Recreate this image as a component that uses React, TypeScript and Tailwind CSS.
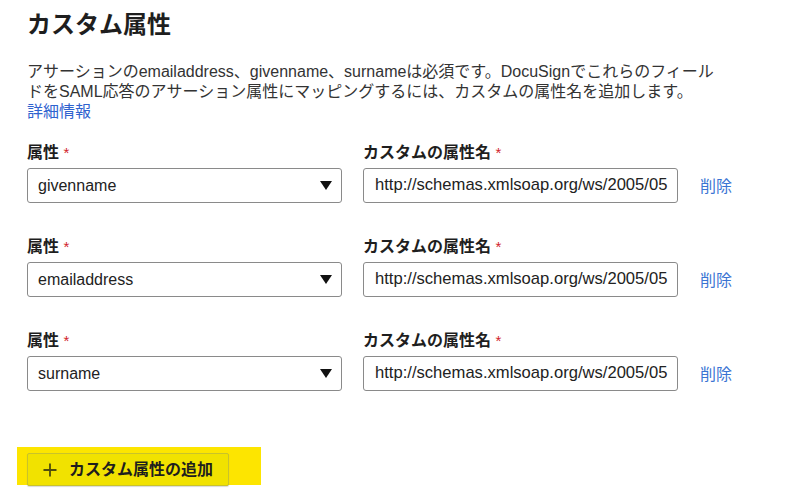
import { Plus } from 'lucide-react';

const rows = ['givenname', 'emailaddress', 'surname'];
const claimUrl = 'http://schemas.xmlsoap.org/ws/2005/05';

const font = "font-['Liberation_Sans','Noto_Sans_CJK_JP',sans-serif]";

const Label = ({ text }: { text: string }) => (
    <label className="block text-[16px] leading-[20px] font-bold text-[#1e1e1e] mb-[5px]">
        {text} <span className="text-[#d1232a] font-normal text-[15px]">*</span>
    </label>
);

const App = () => {
    return (
        <div className={`${font} min-h-[502px] w-[788px] bg-white pl-[27px] pt-[9px] text-[#333]`}>
            <h1 className="text-[24px] leading-[32px] font-bold text-[#1e1e1e]">カスタム属性</h1>

            <p className="mt-[21px] w-[740px] text-[16px] leading-[20px] text-[#333]">
                アサーションのemailaddress、givenname、surnameは必須です。DocuSignでこれらのフィール
                <br />
                ドをSAML応答のアサーション属性にマッピングするには、カスタムの属性名を追加します。
                <br />
                <a href="#" className="text-[#2f63cf]">詳細情報</a>
            </p>

            <div className="mt-[21px] flex flex-col gap-[34px]">
                {rows.map((name) => (
                    <div key={name} className="flex items-end">
                        <div className="w-[315px]">
                            <Label text="属性" />
                            <div className="h-[35px] border border-[#8a8a8a] rounded-[3px] flex items-center justify-between pl-[10px] pr-[9px] text-[16px] text-[#222]">
                                <span>{name}</span>
                                <svg width="12" height="9" viewBox="0 0 12 9" className="fill-[#111]">
                                    <path d="M0 0 L12 0 L6 9 Z" />
                                </svg>
                            </div>
                        </div>
                        <div className="w-[315px] ml-[21px]">
                            <Label text="カスタムの属性名" />
                            <div className="h-[35px] border border-[#8a8a8a] rounded-[3px] flex items-center px-[11px] text-[16.6px] text-[#222] overflow-hidden whitespace-nowrap">
                                {claimUrl}
                            </div>
                        </div>
                        <a href="#" className="ml-[22px] mb-[6px] text-[16px] leading-[20px] text-[#3a74d3]">削除</a>
                    </div>
                ))}
            </div>

            <div className="mt-[56px] -ml-[10px] w-[244px] h-[38px] bg-[#fde500] pl-[10px] pt-[6px]">
                <button className="w-[202px] h-[33px] bg-[#f1e200] border border-[#c9c32a] rounded-[2px] flex items-center pl-[12px] gap-[9px] text-[16px] font-bold text-[#1e1e1e] shadow-[0_1px_1px_rgba(0,0,0,0.15)]">
                    <Plus size={20} strokeWidth={2.2} className="text-[#4f4d0c]" />
                    カスタム属性の追加
                </button>
            </div>
        </div>
    );
};

export default App;
